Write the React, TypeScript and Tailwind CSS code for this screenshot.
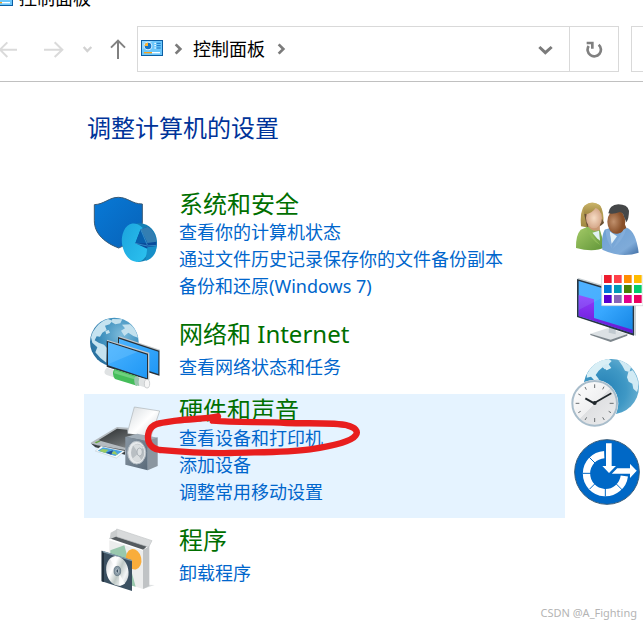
import type { ReactNode } from "react";

const ControlPanelIcon = () => (
  <svg className="h-4 w-[22px] shrink-0" viewBox="0 0 66 48" aria-hidden="true">
    <rect x="1.5" y="1.5" width="63" height="45" fill="#6cc7fb" stroke="#0c5ea3" strokeWidth="3" />
    <path d="M3 30 L36 3 H3Z" fill="#8fd6ff" />
    <circle cx="21" cy="18" r="13" fill="#d9f1ff" />
    <circle cx="21" cy="18" r="10" fill="#1473c4" />
    <path d="M21 18 V8 A10 10 0 0 0 11 18Z" fill="#ffb52e" />
    <path d="M40 10h5M40 17h5M40 24h5" stroke="#fff" strokeWidth="3" />
    <path d="M47 10h12M47 17h12M47 24h12" stroke="#1473c4" strokeWidth="3" />
    <path d="M9 38h24" stroke="#f7a11a" strokeWidth="4" />
    <path d="M33 38h24" stroke="#fff" strokeWidth="4" />
  </svg>
);

const Chevron = () => (
  <svg className="h-3 w-[9px] shrink-0" viewBox="0 0 27 36" aria-hidden="true">
    <path d="M5 4 L19 18 L5 32" fill="none" stroke="#7b7b7b" strokeWidth="8" />
  </svg>
);

const SecurityIcon = () => (
  <svg className="h-[78px] w-[72px] shrink-0" viewBox="9 -3 216 234" aria-hidden="true">
    <defs>
      <linearGradient id="shield" x1="0" y1="0" x2="1" y2="1">
        <stop offset="0" stopColor="#0879d6" />
        <stop offset="1" stopColor="#0762b8" />
      </linearGradient>
      <linearGradient id="pie" x1="0" y1="0" x2="1" y2="1">
        <stop offset="0" stopColor="#1ba3dc" />
        <stop offset="1" stopColor="#2dc4f1" />
      </linearGradient>
    </defs>
    <path d="M28 44 C58 43 72 22 100 22 C128 22 141 42 172 42 V96 C172 136 135 160 101 174 C62 159 28 133 28 92Z" fill="url(#shield)" stroke="#3b5a74" strokeWidth="3" />
    <path d="M150 102 C184 91 215 120 216 155 C217 190 198 213 158 216Z" fill="#1480b5" />
    <ellipse cx="151" cy="158" rx="40" ry="58" transform="rotate(-9 151 158)" fill="url(#pie)" />
    <path d="M151 160 L167 118 L189 110 Q214 130 215 168 L187 176Z" fill="#0a4c9c" />
    <path d="M167 118 L189 110 Q211 126 215 155 L187 159Z" fill="#337eb2" />
    <path d="M151 160 L167 118 L187 159Z" fill="#0860ad" />
    <path d="M151 160 L187 168 L215 166 M167 118 L187 165" fill="none" stroke="#48a5d8" strokeWidth="2" />
    <path d="M187 172 L215 168 Q213 202 182 213Z" fill="#168fc8" />
  </svg>
);

const NetworkIcon = () => (
  <svg className="h-[78px] w-[72px] shrink-0" viewBox="9 12 216 234" aria-hidden="true">
    <defs>
      <radialGradient id="globe" cx="0.65" cy="0.35" r="0.7">
        <stop offset="0" stopColor="#7ebcdc" />
        <stop offset="0.6" stopColor="#3d8fbd" />
        <stop offset="1" stopColor="#286f9e" />
      </radialGradient>
      <linearGradient id="screen" x1="0" y1="0" x2="1" y2="1">
        <stop offset="0" stopColor="#4bb4ff" />
        <stop offset="1" stopColor="#1f97f5" />
      </linearGradient>
    </defs>
    <circle cx="88" cy="96" r="73" fill="url(#globe)" />
    <path d="M23 67 Q41 35 69 27 L82 32 L74 43 L60 47 L65 60 L52 68 L45 80 L35 79 L29 91 L41 98 L57 104 L66 114 L64 158 Q44 145 31 127 L37 112 L22 98 L18 82Z" fill="#c6e3f0" />
    <path d="M82 27 L112 28 L106 40 L91 43 L79 36Z M111 44 L135 43 Q153 57 159 83 L145 78 L130 68 L118 78 L108 62 L120 55Z M61 63 l10-3 4 8-11 5Z" fill="#c3e1ee" />
    <path d="M101 78 L228 120 V198 L101 158Z" fill="#c4c9cc" />
    <path d="M99 81 L223 122 V197 L99 158Z" fill="#273038" />
    <path d="M102 86 L220 125 V192 L102 154Z" fill="url(#screen)" />
    <path d="M66 89 L193 128 V211 L66 171Z" fill="#c4c9cc" />
    <path d="M65 92 L189 131 V210 L65 170Z" fill="#273038" />
    <path d="M69 97 L186 134 V205 L69 166Z" fill="url(#screen)" />
    <path d="M69 97 L158 125 L69 163Z" fill="#72c5ff" opacity=".4" />
    <path d="M65 173 L190 209 Q197 220 188 235 L65 195 Q51 188 65 173Z" fill="#dfe2e3" />
    <ellipse cx="186" cy="221" rx="8" ry="13" fill="#f6f6f6" stroke="#b9bdbf" strokeWidth="2" />
    <path d="M88 177 L154 198 Q162 207 156 227 L90 207 Q79 192 88 177Z" fill="#45bd5a" />
    <path d="M89 181 L154 201 L153 209 L87 190Z" fill="#6fd07e" />
    <path d="M150 199 Q145 213 151 226 L163 228 Q159 214 163 203Z" fill="#9bc5af" />
  </svg>
);

const HardwareIcon = () => (
  <svg className="h-[78px] w-[72px] shrink-0" viewBox="9 -15 216 234" aria-hidden="true">
    <defs>
      <linearGradient id="paper" x1="0" y1="0" x2="1" y2="1">
        <stop offset="0" stopColor="#d5dade" />
        <stop offset="0.5" stopColor="#fff" />
        <stop offset="1" stopColor="#c7cbd0" />
      </linearGradient>
      <linearGradient id="printer" x1="0" y1="0" x2="1" y2="1">
        <stop offset="0" stopColor="#292c2d" />
        <stop offset="0.6" stopColor="#65696b" />
        <stop offset="1" stopColor="#a1a5a7" />
      </linearGradient>
      <linearGradient id="speaker" x1="0" y1="0" x2="1" y2="1">
        <stop offset="0" stopColor="#8997a4" />
        <stop offset="1" stopColor="#5a6a79" />
      </linearGradient>
    </defs>
    <path d="M148 21 L224 33 L195 118 L127 99Z" fill="url(#paper)" stroke="#aeb3b7" strokeWidth="2" />
    <path d="M17 128 L96 81 L130 83 L126 101 L212 112 L189 145 L121 151 L36 137Z" fill="#b5bbc0" />
    <path d="M40 121 L96 86 L127 89 L128 101 L190 108 L120 143Z" fill="url(#printer)" />
    <path d="M17 130 L36 136 L120 150 V164 L31 142Z" fill="#393f43" />
    <path d="M29 127 l13-5 5 2-13 6Z" fill="#65a83d" />
    <path d="M48 138 L120 153 L94 174 L31 153Z" fill="#f8fbfc" stroke="#9ca8ae" />
    <path d="M54 142 L112 154 L91 168 L38 152Z" fill="#4aa3de" />
    <path d="M52 147 L70 149 L61 159 L43 153Z M89 153 L99 165 L75 160Z" fill="#9acb63" />
    <path d="M63 158 L84 151 L79 164Z" fill="#234e93" />
    <path d="M122 111 L186 123 L218 113 L157 101Z" fill="#a3afb9" />
    <path d="M187 123 L218 112 V198 L188 211Z" fill="#8b96a0" />
    <path d="M121 110 L188 123 V211 L121 194Z" fill="url(#speaker)" />
    <ellipse cx="155" cy="158" rx="27" ry="34" fill="#e6e9eb" stroke="#b5bec5" strokeWidth="3" />
    <ellipse cx="158" cy="158" rx="20" ry="27" fill="#b9bfc3" />
    <path d="M158 156 L145 137 Q161 126 174 143Z M158 162 L142 176 Q153 192 169 180Z" fill="#d9dddf" />
    <ellipse cx="164" cy="156" rx="8" ry="12" fill="#dce0e2" stroke="#9aa2a8" strokeWidth="2" />
  </svg>
);

const ProgramsIcon = () => (
  <svg className="h-[78px] w-[72px] shrink-0" viewBox="-6 0 216 234" aria-hidden="true">
    <defs>
      <linearGradient id="disc" x1="0" y1="0" x2="1" y2="1">
        <stop offset="0" stopColor="#c0c5c8" />
        <stop offset="0.35" stopColor="#fff" />
        <stop offset="0.55" stopColor="#bec8c5" />
        <stop offset="0.75" stopColor="#f3f5f6" />
        <stop offset="1" stopColor="#a9b2b7" />
      </linearGradient>
    </defs>
    <path d="M159 207 L194 195 L171 194Z" fill="#dfe2e3" />
    <path d="M58 55 L80 40 L180 70 L160 89Z" fill="#555b5f" />
    <path d="M80 27 L186 62 L176 81 L80 50Z" fill="#d8dadb" stroke="#c2c5c7" strokeWidth="2" />
    <path d="M58 61 L159 92 V207 L58 175Z" fill="#eceded" />
    <path d="M159 90 L178 78 V198 L159 207Z" fill="#c0c3c5" />
    <path d="M62 38 L81 28 V49 L59 58Z" fill="#c9cccd" />
    <path d="M61 91 L103 76 L137 200 L61 180Z" fill="#99c8ad" />
    <ellipse cx="131" cy="118" rx="23" ry="31" transform="rotate(-12 131 118)" fill="#f9ad3b" />
    <path d="M35 92 L126 121 V213 L35 184Z" fill="#3b5061" />
    <path d="M35 92 L42 94 V186 L35 184Z" fill="#202f3c" />
    <path d="M38 92 L126 120 V124 L38 97Z" fill="#819bab" />
    <ellipse cx="82" cy="153" rx="33" ry="45" transform="rotate(-12 82 153)" fill="url(#disc)" />
    <path d="M80 150 L60 117 L78 108Z M87 159 L105 191 L88 197Z" fill="#fff" opacity=".8" />
    <ellipse cx="82" cy="153" rx="10" ry="14" fill="#8799a4" stroke="#546877" strokeWidth="2" />
    <ellipse cx="82" cy="153" rx="4" ry="6" fill="#3b5061" stroke="#d8e1e5" strokeWidth="2" />
  </svg>
);

const AccountsIcon = () => (
  <svg className="h-[72px] w-[72px]" viewBox="18 15 216 216" aria-hidden="true">
    <defs>
      <linearGradient id="green" x1="0" y1="0" x2="1" y2="1">
        <stop offset="0" stopColor="#a5cb68" />
        <stop offset="1" stopColor="#5f9437" />
      </linearGradient>
      <linearGradient id="blue" x1="0" y1="0" x2="1" y2="1">
        <stop offset="0" stopColor="#6c9fd2" />
        <stop offset="0.7" stopColor="#7fabd9" />
        <stop offset="1" stopColor="#3f6da3" />
      </linearGradient>
      <radialGradient id="face">
        <stop offset="0" stopColor="#f6dcc4" />
        <stop offset="1" stopColor="#d5a88a" />
      </radialGradient>
      <radialGradient id="darkFace" cx="0.35">
        <stop offset="0" stopColor="#c0906c" />
        <stop offset="1" stopColor="#884f29" />
      </radialGradient>
      <linearGradient id="hair" x1="0" y1="0" x2="0" y2="1">
        <stop offset="0" stopColor="#c9b368" />
        <stop offset="1" stopColor="#9f8640" />
      </linearGradient>
    </defs>
    <path d="M48 109 Q44 64 58 47 Q81 29 105 46 Q118 66 115 101 L81 115Z" fill="url(#hair)" />
    <path d="M57 70 L66 110 Q100 119 117 98 L110 85Z" fill="#685034" />
    <path d="M68 106 L104 103 L106 143 L84 143Z" fill="#c99873" />
    <path d="M33 174 Q32 135 47 119 L68 110 Q85 128 105 120 L120 172 Q87 188 33 174Z" fill="url(#green)" />
    <path d="M82 128 L102 122 L105 152 L96 145Z" fill="#e1f1f4" />
    <path d="M63 111 L72 112 Q80 140 107 166 Q76 151 63 111Z" fill="#8dba57" />
    <ellipse cx="87" cy="84" rx="24" ry="31" fill="url(#face)" />
    <path d="M57 73 Q83 70 92 53 Q103 56 109 72 Q115 46 94 41 Q66 35 54 54Z" fill="url(#hair)" />
    <path d="M132 111 L179 101 L190 128 L151 151 L131 131Z" fill="#82502d" />
    <path d="M112 179 Q108 140 119 119 L133 115 Q157 145 186 113 Q213 124 221 188 Q171 206 112 179Z" fill="url(#blue)" />
    <path d="M133 124 L156 139 L139 163Z" fill="#e4f2f8" />
    <path d="M122 118 L133 119 L142 177 Q122 151 122 118Z M175 119 L184 114 Q177 149 142 178Z" fill="#83aedb" />
    <ellipse cx="154" cy="95" rx="27" ry="36" fill="url(#darkFace)" />
    <path d="M130 70 Q133 44 160 43 Q187 43 192 62 Q192 86 184 97 L177 80 Q174 67 164 66 Q147 73 130 70Z" fill="#454748" />
  </svg>
);

const AppearanceIcon = () => (
  <svg className="h-[72px] w-[72px]" viewBox="18 30 216 216" aria-hidden="true">
    <defs>
      <linearGradient id="monitor" x1="0" y1="0" x2="1" y2="1">
        <stop offset="0" stopColor="#42aaff" />
        <stop offset="0.5" stopColor="#38a8ff" />
        <stop offset="1" stopColor="#1484e3" />
      </linearGradient>
      <linearGradient id="purple" x1="0" y1="0" x2="0" y2="1">
        <stop offset="0" stopColor="#923dff" />
        <stop offset="1" stopColor="#6516cf" />
      </linearGradient>
    </defs>
    <path d="M76 206 L127 190 L187 207 L137 226Z" fill="#dce1e4" />
    <path d="M76 206 L137 224 L187 207 V212 L137 231 L76 210Z" fill="#7d868c" />
    <path d="M132 185 L152 190 V208 L131 203Z" fill="#c0c9cf" />
    <path d="M38 38 L213 89 V212 L38 155Z" fill="#c8d0d3" />
    <path d="M36 42 L207 92 V212 L36 156Z" fill="#293642" />
    <path d="M41 48 L203 97 V205 L41 153Z" fill="url(#monitor)" />
    <path d="M41 90 L87 103 V159 L203 194 V205 L41 153Z" fill="url(#purple)" />
    <path d="M41 48 L147 80 L41 135Z" fill="#a6ddff" opacity=".14" />
    <path d="M110 28H234V122H110Z" fill="#fff" stroke="#c7ced2" strokeWidth="2" />
    <path d="M117 30h23v24h-23z" fill="#ed1c2e" />
    <path d="M147 30h23v24h-23z" fill="#ff4149" />
    <path d="M177 30h23v24h-23z" fill="#ff8d00" />
    <path d="M207 30h23v24h-23z" fill="#ffbb00" />
    <path d="M117 60h23v24h-23z" fill="#0078d7" />
    <path d="M147 60h23v24h-23z" fill="#009ab7" />
    <path d="M177 60h23v24h-23z" fill="#498205" />
    <path d="M207 60h23v24h-23z" fill="#00cc6a" />
    <path d="M117 90h23v24h-23z" fill="#5900cf" />
    <path d="M147 90h23v24h-23z" fill="#8764b8" />
    <path d="M177 90h23v24h-23z" fill="#e3008c" />
    <path d="M207 90h23v24h-23z" fill="#ea005e" />
  </svg>
);

const ClockIcon = () => (
  <svg className="h-[72px] w-[72px]" viewBox="18 15 216 216" aria-hidden="true">
    <defs>
      <radialGradient id="earth" cx="0.35" cy="0.55" r="0.65">
        <stop offset="0" stopColor="#2480b5" />
        <stop offset="0.65" stopColor="#3f98c5" />
        <stop offset="1" stopColor="#65add0" />
      </radialGradient>
      <linearGradient id="dial" x1="0" y1="0" x2="1" y2="1">
        <stop offset="0" stopColor="#fff" />
        <stop offset="0.5" stopColor="#f0f0f1" />
        <stop offset="0.51" stopColor="#dfe0e2" />
        <stop offset="1" stopColor="#eeeeef" />
      </linearGradient>
    </defs>
    <circle cx="139" cy="110" r="83" fill="url(#earth)" />
    <path d="M66 72 Q80 43 111 31 L131 27 L140 33 L131 43 L139 54 L125 61 L114 51 L101 62 L92 75 L103 89 L87 90 L78 80 L65 83Z" fill="#d9eff6" />
    <path d="M110 49 l15-8 7 9-13 8Z M160 30 Q185 37 198 52 L193 66 L180 62 L172 47Z M190 66 L203 61 Q216 77 220 99 Q221 113 216 126 L205 116 L202 101 L191 95 L186 82Z" fill="#d1eaf4" />
    <circle cx="89" cy="160" r="71" fill="#fff" />
    <circle cx="89" cy="160" r="67" fill="url(#dial)" stroke="#a9bdcb" strokeWidth="6" />
    <path d="M89 103v11M89 204v12M32 160h11M134 160h12M60 111l4 8M113 202l5 8M117 110l-4 8M65 202l-5 8M40 132l7 4M131 184l7 4M47 184l-7 4" stroke="#686d70" strokeWidth="3" />
    <path d="M61 145 L89 161" stroke="#20272b" strokeWidth="6" />
    <path d="M88 159 L139 130" stroke="#20272b" strokeWidth="5" />
    <circle cx="89" cy="159" r="6" fill="#20272b" />
  </svg>
);

const AccessIcon = () => (
  <svg className="h-[72px] w-[72px]" viewBox="108 15 216 216" aria-hidden="true">
    <circle cx="216" cy="126" r="97" fill="#0068c6" stroke="#365b79" strokeWidth="3" />
    <path d="M208 74 A57 57 0 1 0 268 138" fill="none" stroke="#fff" strokeWidth="22" />
    <path d="M163 82 L180 99 M143 130 H168 M164 177 L181 160 M211 174 V199 M244 162 L263 181" stroke="#0068c6" strokeWidth="3" />
    <path d="M245 113 H283 V97 L308 122 L283 149 V133 H226Z" fill="#fff" stroke="#0068c6" strokeWidth="4" />
    <path d="M211 38 H232 V106 H248 L222 132 L197 106 H211Z" fill="#fff" stroke="#0068c6" strokeWidth="4" />
  </svg>
);

type CategoryProps = {
  title: string;
  icon: ReactNode;
  links: string[];
  circled?: boolean;
};

const categories: CategoryProps[] = [
  {
    title: "系统和安全",
    icon: <SecurityIcon />,
    links: ["查看你的计算机状态", "通过文件历史记录保存你的文件备份副本", "备份和还原(Windows 7)"],
  },
  { title: "网络和 Internet", icon: <NetworkIcon />, links: ["查看网络状态和任务"] },
  {
    title: "硬件和声音",
    icon: <HardwareIcon />,
    links: ["查看设备和打印机", "添加设备", "调整常用移动设置"],
    circled: true,
  },
  { title: "程序", icon: <ProgramsIcon />, links: ["卸载程序"] },
];

const shortcuts = [
  { label: "用户帐户", icon: <AccountsIcon /> },
  { label: "外观和个性化", icon: <AppearanceIcon /> },
  { label: "时钟和区域", icon: <ClockIcon /> },
  { label: "轻松使用", icon: <AccessIcon /> },
];

const Category = ({ title, icon, links, circled }: CategoryProps) => (
  <section className={`relative flex gap-[19px] pt-px pl-1 ${circled ? "bg-[#e5f3ff]" : ""}`}>
    {icon}
    <div className="min-w-0 flex-1 pb-3">
      <h2 className={`text-2xl leading-[30px] text-[#006f00] ${links.length === 1 ? "py-[5px]" : ""}`}>
        <a href="#">{title}</a>
      </h2>
      <ul className="text-lg leading-[27px] text-[#0066cc]">
        {links.map((link) => (
          <li key={link}><a href="#" className="hover:underline">{link}</a></li>
        ))}
      </ul>
    </div>
    {circled && (
      <svg className="pointer-events-none absolute top-[18px] left-[60px] h-12 w-[218px]" viewBox="192 66 654 144" aria-hidden="true">
        <path
          d="M398 92 C470 99 550 94 620 99 C690 101 770 97 801 106 C826 112 836 124 827 136 C812 157 751 169 690 178 C620 188 535 186 450 189 C370 192 285 184 239 180 C203 174 200 145 207 124 C217 98 247 98 290 92 C335 86 375 87 414 79"
          fill="none"
          stroke="#e81e1e"
          strokeWidth="19"
          strokeLinecap="round"
          strokeLinejoin="round"
        />
      </svg>
    )}
  </section>
);

const App = () => {
  return (
    <div className="overflow-hidden bg-white font-['Noto_Sans','Noto_Sans_CJK_SC',sans-serif]">
      <div className="flex h-2.5 items-end overflow-hidden">
        <div className="-ml-[9px] flex items-end gap-1.5">
          <div className="pb-1"><ControlPanelIcon /></div>
          <span className="text-lg leading-6 text-black">控制面板</span>
        </div>
      </div>

      <header className="mt-4 flex items-center border-b border-[#c0c0c0] pb-[9px]">
        <button aria-label="后退" className="shrink-0">
          <svg className="h-5 w-[18px]" viewBox="0 117 54 60">
            <path d="M51 149 H1 M22 127 L0 149 L22 171" fill="none" stroke="#dadada" strokeWidth="6" />
          </svg>
        </button>
        <button aria-label="前进" className="ml-[25px] shrink-0">
          <svg className="h-5 w-[21px]" viewBox="129 117 63 60">
            <path d="M132 149 H186 M164 127 L187 149 L164 171" fill="none" stroke="#dadada" strokeWidth="6" />
          </svg>
        </button>
        <button aria-label="最近浏览的位置" className="ml-[18px] shrink-0">
          <svg className="h-5 w-[11px]" viewBox="246 117 33 60">
            <path d="M251 141 L262 153 L274 141" fill="none" stroke="#d2d2d2" strokeWidth="7" />
          </svg>
        </button>
        <button aria-label="上移" className="ml-4 shrink-0">
          <svg className="h-5 w-[18px]" viewBox="327 120 54 60">
            <path d="M354 180 V126 M333 146 L354 125 L375 146" fill="none" stroke="#808080" strokeWidth="6" />
          </svg>
        </button>
        <div className="ml-2.5 flex h-[46px] min-w-0 flex-1 border border-[#d9d9d9]">
          <nav className="flex min-w-0 flex-1 items-center pl-[3px]">
            <div className="pb-0.5"><ControlPanelIcon /></div>
            <div className="ml-[11px] flex"><Chevron /></div>
            <a href="#" className="ml-2.5 text-lg leading-6 whitespace-nowrap text-black">控制面板</a>
            <div className="ml-3 flex"><Chevron /></div>
          </nav>
          <button aria-label="以前的位置" className="px-4">
            <svg className="h-3 w-[15px]" viewBox="0 0 45 36">
              <path d="M4 12 L22 29 L41 12" fill="none" stroke="#7b7b7b" strokeWidth="9" />
            </svg>
          </button>
          <button aria-label="刷新" className="flex w-[49px] items-center justify-center border-l border-[#d9d9d9]">
            <svg className="h-[18px] w-[18px]" viewBox="0 0 54 54">
              <path d="M11 18 A20 20 0 1 0 41 14" fill="none" stroke="#808080" strokeWidth="8" />
              <path d="M5 5 H26 V26 H18 V13 H5Z" fill="#808080" />
            </svg>
          </button>
        </div>
        <div className="ml-3 h-[46px] w-3 border border-r-0 border-[#d9d9d9]" />
      </header>

      <main className="pt-[31px] pl-[84px]">
        <h1 className="pl-[3px] text-2xl leading-[30px] text-[#003399]">调整计算机的设置</h1>
        <div className="mt-[45px] flex gap-1.5">
          <div className="flex min-w-0 flex-1 flex-col gap-px">
            {categories.map((category) => (
              <Category key={category.title} {...category} />
            ))}
          </div>
          <div className="flex shrink-0 flex-col gap-2 pt-[7px]">
            {shortcuts.map(({ label, icon }) => (
              <a key={label} href="#" aria-label={label}>{icon}</a>
            ))}
          </div>
        </div>
      </main>

      <footer className="pt-1.5 pr-1.5 text-right text-[11px] leading-4 text-[#b4b4b4]">CSDN @A_Fighting</footer>
    </div>
  );
};

export default App;
